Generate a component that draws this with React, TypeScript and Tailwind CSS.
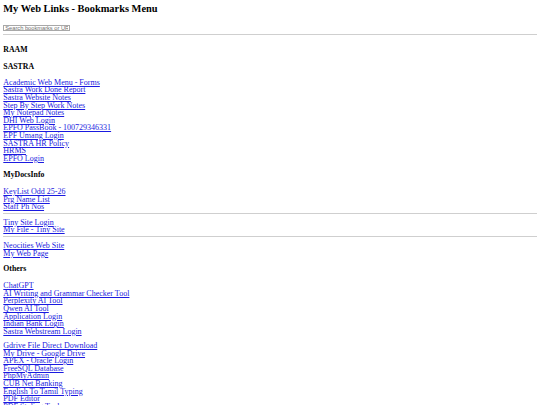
const sastraLinks = [
  "Academic Web Menu - Forms",
  "Sastra Work Done Report",
  "Sastra Website Notes",
  "Step By Step Work Notes",
  "My Notepad Notes",
  "DHI Web Login",
  "EPFO PassBook - 100729346331",
  "EPF Umang Login",
  "SASTRA HR Policy",
  "HRMS",
  "EPFO Login",
];

const docsLinks = ["KeyList Odd 25-26", "Prg Name List", "Staff Ph Nos"];
const tinyLinks = ["Tiny Site Login", "My File - Tiny Site"];
const neoLinks = ["Neocities Web Site", "My Web Page"];

const aiLinks = [
  "ChatGPT",
  "AI Writing and Grammar Checker Tool",
  "Perplexity AI Tool",
  "Qwen AI Tool",
  "Application Login",
  "Indian Bank Login",
  "Sastra Webstream Login",
];

const toolLinks = [
  "Gdrive File Direct Download",
  "My Drive - Google Drive",
  "APEX - Oracle Login",
  "FreeSQL Database",
  "PhpMyAdmin",
  "CUB Net Banking",
  "English To Tamil Typing",
  "PDF Editor",
  "PDF Styling Tool",
];

function LinkList({ items, className = "" }: { items: string[]; className?: string }) {
  return (
    <div className={"flex flex-col items-start " + className}>
      {items.map((t) => (
        <a
          key={t}
          href="#"
          className="text-[8px] leading-[7.6px] text-[#1a1ae0] underline whitespace-nowrap"
        >
          {t}
        </a>
      ))}
    </div>
  );
}

function Heading({ children, className = "" }: { children: string; className?: string }) {
  return (
    <h3 className={"text-[7.8px] leading-[9.4px] font-bold text-black " + className}>
      {children}
    </h3>
  );
}

function Rule({ className = "" }: { className?: string }) {
  return <hr className={"border-0 border-t border-[#cfcfcf] " + className} />;
}

export default function App() {
  return (
    <div
      className="min-h-screen bg-white px-[3.3px] pt-[2.5px] text-black"
      style={{ fontFamily: '"Liberation Serif", "Times New Roman", serif' }}
    >
      <h1 className="text-[10.4px] leading-[11.8px] font-bold">My Web Links - Bookmarks Menu</h1>

      <input
        type="text"
        placeholder="Search bookmarks or URL"
        className="mt-[10.4px] block h-[6.4px] w-[67px] border border-[#a8a8a8] px-[1px] text-[5.7px] leading-[5px] placeholder:text-[#707070] outline-none"
        style={{ fontFamily: '"Liberation Sans", Arial, sans-serif' }}
      />

      <Rule className="mt-[2.9px]" />

      <Heading className="mt-[10px]">RAAM</Heading>
      <Heading className="mt-[7.6px]">SASTRA</Heading>
      <LinkList items={sastraLinks} className="mt-[7.4px]" />

      <Heading className="mt-[8.2px]">MyDocsInfo</Heading>
      <LinkList items={docsLinks} className="mt-[8.1px]" />

      <Rule className="mt-[2.1px]" />
      <LinkList items={tinyLinks} className="mt-[4.9px]" />
      <Rule className="mt-[2.1px]" />
      <LinkList items={neoLinks} className="mt-[4.9px]" />

      <Heading className="mt-[7.1px]">Others</Heading>
      <LinkList items={aiLinks} className="mt-[8.6px]" />
      <LinkList items={toolLinks} className="mt-[6.6px]" />
    </div>
  );
}
